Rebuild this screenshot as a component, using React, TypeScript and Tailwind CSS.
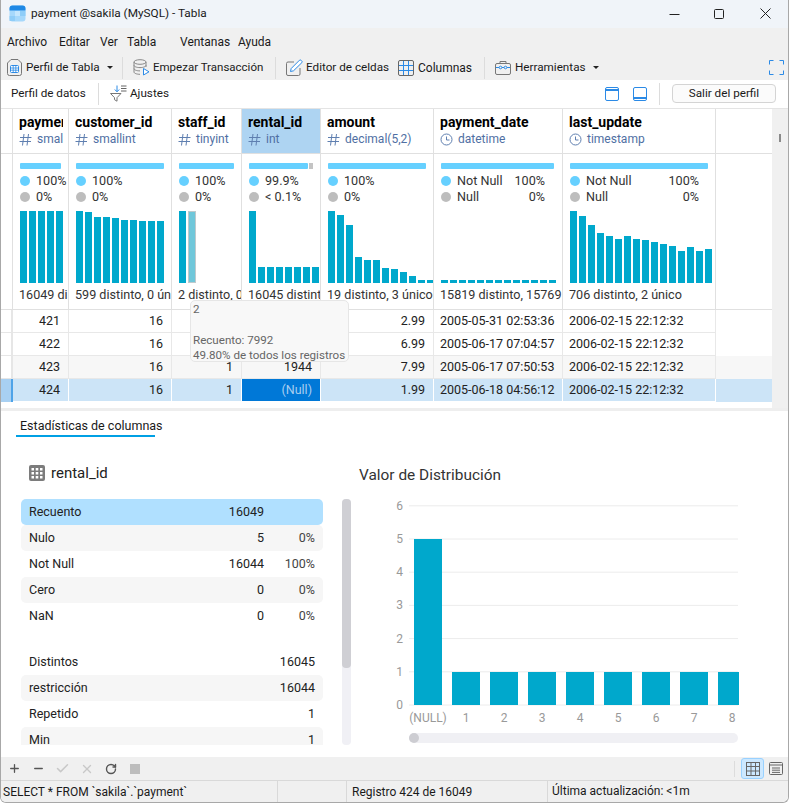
import { Check, Minus, Plus, RotateCw, X } from "lucide-react";

// Shared column template for header, summary and data rows of the profile grid.
const GRID_COLS = "grid grid-cols-[12px_56px_103px_70px_79px_113px_129px_153px]";

type Column = {
    name: string;
    type: string;
    clock?: boolean;
    active?: boolean;
    barClass: string;
    bars: number[];
    hoverBar?: number;
    notNull: string;
    nullPct: string;
    labels?: string;
    distinct: string;
    spare?: boolean;
};

const COLUMNS: Column[] = [
    { name: "payment_id", type: "smallint", barClass: "w-[41px]", bars: [72, 72, 72, 72, 72], notNull: "100%", nullPct: "0%", distinct: "16049 distinto, 16049 único" },
    { name: "customer_id", type: "smallint", barClass: "w-[88px]", bars: [72, 71, 66, 66, 65, 63, 63, 62, 62, 62], notNull: "100%", nullPct: "0%", distinct: "599 distinto, 0 único" },
    { name: "staff_id", type: "tinyint", barClass: "w-[55px]", bars: [72, 72], hoverBar: 1, notNull: "100%", nullPct: "0%", distinct: "2 distinto, 0 único" },
    { name: "rental_id", type: "int", active: true, barClass: "w-[59px]", spare: true, bars: [72, 16, 16, 16, 16, 16, 16, 16], notNull: "99.9%", nullPct: "< 0.1%", distinct: "16045 distinto, 16043 único" },
    { name: "amount", type: "decimal(5,2)", barClass: "w-[98px]", bars: [72, 68, 58, 26, 23, 23, 15, 14, 11, 7, 3, 3], notNull: "100%", nullPct: "0%", distinct: "19 distinto, 3 único" },
    { name: "payment_date", type: "datetime", clock: true, barClass: "w-[113px]", bars: [3, 3, 3, 3, 3, 3, 3, 3, 3, 3, 3, 3, 3], labels: "w-[88px]", notNull: "100%", nullPct: "0%", distinct: "15819 distinto, 15769 único" },
    { name: "last_update", type: "timestamp", clock: true, barClass: "w-[138px]", bars: [72, 67, 58, 50, 47, 44, 47, 44, 43, 41, 39, 37, 32, 36, 32, 34], labels: "w-[113px]", notNull: "100%", nullPct: "0%", distinct: "706 distinto, 2 único" },
];

const ROWS = [
    ["421", "16", "1", "1000", "2.99", "2005-05-31 02:53:36", "2006-02-15 22:12:32"],
    ["422", "16", "2", "1381", "6.99", "2005-06-17 07:04:57", "2006-02-15 22:12:32"],
    ["423", "16", "1", "1944", "7.99", "2005-06-17 07:50:53", "2006-02-15 22:12:32"],
    ["424", "16", "1", "(Null)", "1.99", "2005-06-18 04:56:12", "2006-02-15 22:12:32"],
];

const STATS = [
    { label: "Recuento", value: "16049", pct: "" },
    { label: "Nulo", value: "5", pct: "0%" },
    { label: "Not Null", value: "16044", pct: "100%" },
    { label: "Cero", value: "0", pct: "0%" },
    { label: "NaN", value: "0", pct: "0%" },
];

const STATS_MORE = [
    { label: "Distintos", value: "16045" },
    { label: "restricción", value: "16044" },
    { label: "Repetido", value: "1" },
    { label: "Min", value: "1" },
];

function HashIcon() {
    return (
        <svg width="13" height="13" viewBox="0 0 13 13" fill="none" stroke="#5f7fb0" strokeWidth="1">
            <path d="M1 4.500h11.500M0.500 8.500h11.500M5 1 3.500 12.500M9.500 1 8 12.500" />
        </svg>
    );
}

function ClockIcon() {
    return (
        <svg width="13" height="13" viewBox="0 0 13 13" fill="none" stroke="#5f7fb0" strokeWidth="1">
            <circle cx="6.500" cy="6.500" r="5.500" />
            <path d="M6.500 3.500v3.500h3" />
        </svg>
    );
}

function AppIcon() {
    return (
        <svg width="17" height="17" viewBox="0 0 17 17">
            <rect x="0.500" y="0.500" width="16" height="16" rx="3" fill="#a6d8fb" />
            <path d="M0.500 5.500v-2a3 3 0 0 1 3-3h10a3 3 0 0 1 3 3v2z" fill="#1e88e5" />
            <rect x="6" y="6" width="5" height="5" fill="#c4e6fd" />
            <rect x="0.500" y="11" width="5.500" height="5" fill="#8fcdf8" />
            <rect x="11" y="6" width="5.500" height="5" fill="#8fcdf8" />
        </svg>
    );
}

function TableDocIcon() {
    return (
        <svg width="15" height="17" viewBox="0 0 15 17" fill="none">
            <path d="M4 .5h7l3.500 3.500v10.500a2 2 0 0 1-2 2h-10a2 2 0 0 1-2-2V4z" stroke="#777" />
            <rect x="3.500" y="6.500" width="8" height="7" rx="1" fill="#fff" stroke="#2b8ae6" />
            <path d="M3.500 9h8M3.500 11.200h8M6.200 7v6M8.800 7v6" stroke="#2b8ae6" strokeWidth=".8" />
        </svg>
    );
}

function DbPlayIcon() {
    return (
        <svg width="17" height="17" viewBox="0 0 17 17" fill="none" stroke="#888">
            <ellipse cx="7" cy="3" rx="6" ry="2.300" />
            <path d="M1 3v10c0 1.300 2.700 2.300 6 2.300M13 3v5M1 6.300c0 1.300 2.700 2.300 6 2.300s6-1 6-2.300M1 9.600c0 1.300 2.700 2.300 6 2.300" />
            <path d="M10.500 9.500v6.500l5.500-3.200z" stroke="#2b8ae6" fill="#fff" />
        </svg>
    );
}

function PencilIcon() {
    return (
        <svg width="17" height="17" viewBox="0 0 17 17" fill="none">
            <path d="M8 3H2a1.500 1.500 0 0 0-1.500 1.500v10.500a1.500 1.500 0 0 0 1.500 1.500h10.500a1.500 1.500 0 0 0 1.500-1.500V9" stroke="#777" />
            <path d="M4.500 12.500 5.200 9.500 13.500 1.200a1 1 0 0 1 1.400 0l1 1a1 1 0 0 1 0 1.400L7.500 11.800z" stroke="#2b8ae6" fill="#fff" />
        </svg>
    );
}

function ColumnsIcon() {
    return (
        <svg width="16" height="16" viewBox="0 0 16 16" fill="none">
            <rect x=".5" y=".5" width="15" height="15" rx="1.500" stroke="#666" />
            <path d="M5.500 1v14M10.500 1v14M1 5.500h14M1 10.500h14" stroke="#2b8ae6" />
        </svg>
    );
}

function ToolboxIcon() {
    return (
        <svg width="16" height="16" viewBox="0 0 16 16" fill="none">
            <rect x=".5" y="3.500" width="15" height="11" rx="1.500" stroke="#777" />
            <path d="M5 3.500V1.500h6v2" stroke="#777" />
            <path d="M1 7.500h3M7 7.500h2M12 7.500h3" stroke="#2b8ae6" />
            <circle cx="5.500" cy="7.500" r="1.300" stroke="#2b8ae6" />
            <circle cx="10.500" cy="7.500" r="1.300" stroke="#2b8ae6" />
        </svg>
    );
}

function FilterSortIcon() {
    return (
        <svg width="17" height="17" viewBox="0 0 17 17" fill="none">
            <path d="M.5 8.500h10.500l-4 4.200v3.500l-2.500-1.500v-2z" stroke="#777" />
            <path d="M7 .5v6M4.800 4.500 7 6.800l2.200-2.300" stroke="#2b8ae6" />
            <path d="M11 1h5.500M11 3.500h5.500M11 6h5.500" stroke="#666" />
        </svg>
    );
}

function PanelIcon({ bottom }: { bottom?: boolean }) {
    return (
        <svg width="14" height="14" viewBox="0 0 14 14" fill="none">
            <rect x=".5" y=".5" width="13" height="13" rx="1.500" stroke="#2b8ae6" />
            <path d={bottom ? "M1 11h12" : "M1 3h12"} stroke="#2b8ae6" strokeWidth="2" />
        </svg>
    );
}

function Caret() {
    return <span className="h-0 w-0 border-x-[3px] border-t-[3px] border-x-transparent border-t-[#222]" />;
}

function Sep({ className }: { className: string }) {
    return <span className={`h-[22px] w-px shrink-0 bg-[#dcdcdc] ${className}`} />;
}

function GridBox() {
    return (
        <svg width="16" height="16" viewBox="0 0 16 16" fill="#7c7c7c">
            <rect width="16" height="16" rx="2" />
            <path fill="#fff" d="M2.500 3h2.500v2.500H2.500zM6.700 3h2.600v2.500H6.700zM11 3h2.500v2.500H11zM2.500 7h2.500v2.500H2.500zM6.700 7h2.600v2.500H6.700zM11 7h2.500v2.500H11zM2.500 11h2.500v2.500H2.500zM6.700 11h2.600v2.500H6.700zM11 11h2.500v2.500H11z" />
        </svg>
    );
}

function TitleBar() {
    return (
        <div className="flex h-[28px] items-center bg-[#f0f4f9] pl-[8px]">
            <AppIcon />
            <span className="ml-[5px] text-[11.8px] text-[#1a1a1a]">payment @sakila (MySQL) - Tabla</span>
            <div className="ml-auto flex items-center text-[#222]">
                <svg className="mr-[34px]" width="11" height="11" viewBox="0 0 11 11" stroke="currentColor"><path d="M.5 6.500h10" /></svg>
                <svg className="mr-[36px]" width="10" height="10" viewBox="0 0 10 10" fill="none" stroke="currentColor"><rect x=".5" y=".5" width="9" height="9" rx="1" /></svg>
                <svg className="mr-[17px]" width="11" height="11" viewBox="0 0 11 11" stroke="currentColor"><path d="m.5.5 10 10M10.500.5l-10 10" /></svg>
            </div>
        </div>
    );
}

function MenuBar() {
    return (
        <div className="flex h-[27px] items-center bg-[#f0f0f0] pl-[6px] pt-[2px] text-[12px] text-[#1a1a1a]">
            <span className="w-[52px]">Archivo</span>
            <span className="w-[41px]">Editar</span>
            <span className="w-[27px]">Ver</span>
            <span className="w-[53px]">Tabla</span>
            <span className="w-[58px]">Ventanas</span>
            <span>Ayuda</span>
        </div>
    );
}

function ToolBar() {
    return (
        <div className="flex h-[25px] items-center bg-[#f0f0f0] pl-[6px] pt-[1px] text-[11.7px] text-[#1a1a1a]">
            <TableDocIcon />
            <span className="ml-[4px] w-[81px] whitespace-nowrap">Perfil de Tabla</span>
            <Caret />
            <Sep className="ml-[9px]" />
            <span className="ml-[10px] flex"><DbPlayIcon /></span>
            <span className="ml-[3px] w-[113px] whitespace-nowrap text-[11.5px]">Empezar Transacción</span>
            <Sep className="ml-[9px]" />
            <span className="ml-[10px] flex"><PencilIcon /></span>
            <span className="ml-[3px] w-[84px] whitespace-nowrap">Editor de celdas</span>
            <span className="ml-[8px] flex"><ColumnsIcon /></span>
            <span className="ml-[4px] w-[56px] whitespace-nowrap text-[12px]">Columnas</span>
            <Sep className="ml-[10px]" />
            <span className="ml-[10px] flex"><ToolboxIcon /></span>
            <span className="ml-[4px] w-[78px] whitespace-nowrap">Herramientas</span>
            <Caret />
            <svg className="ml-[170px]" width="15" height="15" viewBox="0 0 15 15" fill="none" stroke="#2b8ae6">
                <path d="M.5 4.500V.5h4M10.500.5h4v4M14.500 10.500v4h-4M4.500 14.500h-4v-4" />
            </svg>
        </div>
    );
}

function ProfileBar() {
    return (
        <div className="flex h-[29px] items-center border-b border-[#e4e4e4] bg-white pl-[10px] text-[11.7px] text-[#1a1a1a]">
            <span className="w-[77px] whitespace-nowrap">Perfil de datos</span>
            <Sep className="ml-[10px]" />
            <span className="ml-[11px] flex"><FilterSortIcon /></span>
            <span className="ml-[3px] w-[40px]">Ajustes</span>
            <span className="ml-[435px] flex"><PanelIcon /></span>
            <span className="ml-[14px] flex"><PanelIcon bottom /></span>
            <Sep className="ml-[12px]" />
            <button className="ml-[12px] h-[19px] w-[104px] rounded-[4px] border border-[#d4d4d4] bg-[#fbfbfb] text-[11.7px] leading-none text-[#1a1a1a]">
                Salir del perfil
            </button>
        </div>
    );
}

function MiniBars({ col }: { col: Column }) {
    return (
        <div className="flex h-[72px] items-end gap-[2px] overflow-hidden">
            {col.bars.map((h, i) => (
                <span
                    key={i}
                    className={
                        col.hoverBar === i
                            ? "w-[8px] shrink-0 border border-[#bfc9cc] bg-[#6fc7da]"
                            : "w-[7px] shrink-0 bg-[#00a8cc]"
                    }
                    style={{ height: h }}
                />
            ))}
        </div>
    );
}

function SummaryCell({ col }: { col: Column }) {
    return (
        <div className="flex h-[155px] flex-col overflow-hidden border-r border-[#e0e0e0] pl-[7px] pt-[9px] text-[12.6px] leading-[16px] text-[#333]">
            <div className="flex items-center gap-[1px]">
                <span className={`h-[6px] rounded-[1px] bg-[#66d0ff] ${col.barClass}`} />
                {col.spare && <span className="h-[6px] w-[4px] bg-[#c4c4c4]" />}
            </div>
            <div className="mt-[4px] flex items-center whitespace-nowrap">
                <span className="mr-[6px] size-[10px] shrink-0 rounded-full bg-[#66d0ff]" />
                {col.labels ? (
                    <span className={`flex justify-between ${col.labels}`}>
                        <span>Not Null</span>
                        <span>{col.notNull}</span>
                    </span>
                ) : (
                    col.notNull
                )}
            </div>
            <div className="flex items-center whitespace-nowrap">
                <span className="mr-[6px] size-[10px] shrink-0 rounded-full bg-[#bdbdbd]" />
                {col.labels ? (
                    <span className={`flex justify-between ${col.labels}`}>
                        <span>Null</span>
                        <span>{col.nullPct}</span>
                    </span>
                ) : (
                    col.nullPct
                )}
            </div>
            <div className="mt-[6px]">
                <MiniBars col={col} />
            </div>
            <div className="mt-[4px] -ml-[1px] whitespace-nowrap">{col.distinct}</div>
        </div>
    );
}

function GridHeader() {
    return (
        <div className={`${GRID_COLS} h-[45px] border-b border-[#e0e0e0]`}>
            <div className="border-r border-[#e0e0e0]" />
            {COLUMNS.map((col) => (
                <div
                    key={col.name}
                    className={`border-r border-[#e0e0e0] pl-[6px] pr-[5px] pt-[4px] ${col.active ? "bg-[#aed4f2]" : "bg-white"}`}
                >
                    <div className="overflow-hidden">
                        <div className="whitespace-nowrap text-[14px] font-bold leading-[18px] text-black">{col.name}</div>
                        <div className="flex items-center whitespace-nowrap text-[12px] leading-[16px] text-[#4f6fa3]">
                            <span className="mr-[5px] flex shrink-0 pt-[2px]">{col.clock ? <ClockIcon /> : <HashIcon />}</span>
                            {col.type}
                        </div>
                    </div>
                </div>
            ))}
        </div>
    );
}

function DataRow({ row, index }: { row: string[]; index: number }) {
    const selected = index === 3;
    const rowBg = selected ? "bg-[#cce4f7]" : index === 2 ? "bg-[#f7f7f7]" : "bg-white";
    return (
        <div className={`${GRID_COLS} h-[23px] text-[12.5px] leading-[22px] text-[#222] ${rowBg}`}>
            <div className={`border-r-2 ${selected ? "border-[#4ea3e8] bg-[#a8d0f2]" : "border-b border-[#e6e6e6] bg-white"}`} />
            {row.map((value, i) => {
                const isNull = value === "(Null)";
                return (
                    <div
                        key={i}
                        className={`overflow-hidden whitespace-nowrap border-b border-r ${i < 5 ? "px-[8px] text-right" : "px-[6px] text-left"} ${selected ? "border-white" : "border-[#e8e8e8]"} ${isNull ? "bg-[#0078d7] text-[#a9cdf0]" : ""}`}
                    >
                        {value}
                    </div>
                );
            })}
        </div>
    );
}

function ProfileGrid() {
    return (
        <div className="relative flex h-[300px] bg-white">
            <div className="flex-1 overflow-hidden">
                <GridHeader />
                <div className={`${GRID_COLS} border-b border-[#e0e0e0]`}>
                    <div className="border-r border-[#e0e0e0]" />
                    {COLUMNS.map((col) => (
                        <SummaryCell key={col.name} col={col} />
                    ))}
                </div>
                {ROWS.map((row, i) => (
                    <DataRow key={row[0]} row={row} index={i} />
                ))}
            </div>
            <div className="flex w-[16px] justify-center bg-[#f0f0f0] pt-[25px]">
                <span className="h-[8px] w-[2px] bg-[#8a8a8a]" />
            </div>
            <div className="absolute left-[189px] top-[191px] h-[62px] w-[159px] rounded-[5px] border border-[#e6e6e6] bg-[#f8f8f8] px-[2px] pt-[1px] text-[11.6px] leading-[15px] text-[#666]">
                <div>2</div>
                <div className="mt-[16px]">Recuento: 7992</div>
                <div className="whitespace-nowrap">49.80% de todos los registros</div>
            </div>
        </div>
    );
}

function StatsList() {
    return (
        <div className="w-[302px] text-[12.5px] text-[#222]">
            {STATS.map((s, i) => (
                <div
                    key={s.label}
                    className={`flex h-[26px] items-center rounded-[5px] px-[8px] ${i === 0 ? "bg-[#b0e0ff]" : i % 2 === 1 ? "bg-[#f6f6f6]" : ""}`}
                >
                    <span className="flex-1">{s.label}</span>
                    <span className="w-[60px] text-right">{s.value}</span>
                    <span className="w-[51px] text-right text-[#444]">{s.pct}</span>
                </div>
            ))}
            <div className="h-[18px]" />
            <div className="h-[2px]" />
            {STATS_MORE.map((s, i) => (
                <div
                    key={s.label}
                    className={`flex h-[26px] items-center rounded-[5px] px-[8px] ${i % 2 === 1 ? "bg-[#f6f6f6]" : ""}`}
                >
                    <span className="flex-1">{s.label}</span>
                    <span>{s.value}</span>
                </div>
            ))}
        </div>
    );
}

function DistributionChart() {
    const ticks = [6, 5, 4, 3, 2, 1, 0];
    const labels = ["(NULL)", "1", "2", "3", "4", "5", "6", "7", "8"];
    const tickY = (t: number) => 705 - t * 33.2;
    return (
        <svg width="380" height="240" viewBox="359 500 380 240" className="block">
            {ticks.map((t) => (
                <g key={t}>
                    <line x1="409" x2="738" y1={tickY(t)} y2={tickY(t)} stroke="#ececec" />
                    <text x="403" y={tickY(t) + 4} textAnchor="end" fontSize="12" fill="#999">{t}</text>
                </g>
            ))}
            {labels.map((label, i) => {
                const x = 414 + i * 38;
                const width = i === 8 ? 21 : 28;
                const top = i === 0 ? 539 : 672;
                return (
                    <g key={label}>
                        <rect x={x} y={top} width={width} height={705 - top} fill="#00a8cc" />
                        <text x={i === 8 ? 732 : x + 14} y="722" textAnchor="middle" fontSize="12" fill="#999">{label}</text>
                    </g>
                );
            })}
        </svg>
    );
}

function StatsPanel() {
    return (
        <div className="relative flex h-[347px] flex-col bg-white">
            <div className="pl-[15px] pt-[2px]">
                <div className="inline-block w-[139px] whitespace-nowrap border-b-2 border-[#00a0e4] px-[4px] pb-[1px] text-[12.5px] leading-[16px] text-[#1a1a1a]">
                    Estadísticas de columnas
                </div>
            </div>
            <div className="flex flex-1 pl-[20px] pt-[23px]">
                <div className="w-[338px]">
                    <div className="flex h-[25px] items-center pl-[8px] pt-[2px] text-[15px] text-[#222]">
                        <GridBox />
                        <span className="ml-[6px]">rental_id</span>
                    </div>
                    <div className="mt-[14px] flex h-[246px]">
                        <div className="h-full overflow-hidden">
                            <StatsList />
                        </div>
                        <div className="ml-[19px] h-full w-[9px] rounded-[4px] bg-[#f0f0f5]">
                            <div className="h-[169px] rounded-[4px] bg-[#cfcfd4]" />
                        </div>
                    </div>
                </div>
                <div className="flex-1">
                    <div className="flex h-[25px] items-center whitespace-nowrap pt-[7px] text-[15.4px] text-[#333]">Valor de Distribución</div>
                    <div className="mt-[15px]">
                        <DistributionChart />
                    </div>
                    <div className="ml-[50px] mt-[-7px] h-[10px] w-[329px] rounded-[5px] bg-[#f0f0f4]">
                        <div className="h-[10px] w-[10px] rounded-full bg-[#cdcdd2]" />
                    </div>
                </div>
            </div>
        </div>
    );
}

function BottomBar() {
    return (
        <div className="flex h-[23px] items-center bg-[#f0f0f0] pl-[7px]">
            <Plus size={13} strokeWidth={2.4} className="text-[#555]" />
            <Minus size={13} strokeWidth={2.4} className="ml-[11px] text-[#555]" />
            <Check size={15} strokeWidth={2.4} className="ml-[10px] text-[#c8c8c8]" />
            <X size={14} strokeWidth={2.4} className="ml-[10px] text-[#c8c8c8]" />
            <RotateCw size={12} strokeWidth={2.8} className="ml-[11px] text-[#555]" />
            <span className="ml-[13px] size-[10px] bg-[#bdbdbd]" />
            <Sep className="ml-[594px] !h-[16px]" />
            <span className="ml-[6px] flex h-[21px] w-[23px] items-center justify-center rounded-[3px] border border-[#99d1ff] bg-[#cce8ff]">
                <svg width="14" height="14" viewBox="0 0 14 14" fill="none" stroke="#666">
                    <rect x=".5" y=".5" width="13" height="13" />
                    <path d="M.5 4.500h13M.5 9h13M5 .5v13M9.500 .5v13" />
                </svg>
            </span>
            <svg className="ml-[5px]" width="14" height="13" viewBox="0 0 14 13" fill="none" stroke="#666">
                <rect x=".5" y=".5" width="13" height="12" rx="1" />
                <path d="M.5 3h13M3 6h8M3 8.200h8M3 10.400h8" />
            </svg>
        </div>
    );
}

function StatusBar() {
    return (
        <div className="flex h-[22px] items-center rounded-br-[6px] border-t border-[#d9d9d9] bg-[#f0f0f0] text-[12px] text-[#1a1a1a]">
            <span className="w-[276px] whitespace-nowrap pl-[2px]">SELECT * FROM `sakila`.`payment`</span>
            <span className="h-full w-[70px] border-x border-[#d9d9d9]" />
            <span className="w-[200px] pl-[5px]">Registro 424 de 16049</span>
            <span className="h-full border-l border-[#d9d9d9] pl-[4px] leading-[21px]">Última actualización: &lt;1m</span>
        </div>
    );
}

export default function App() {
    return (
        <div className="flex h-[803px] w-[789px] flex-col overflow-hidden rounded-b-[6px] border-x border-b border-[#a8a8a8] bg-white font-['Roboto',sans-serif]">
            <TitleBar />
            <MenuBar />
            <ToolBar />
            <ProfileBar />
            <ProfileGrid />
            <div className="h-[3px] bg-[#eeeeee]" />
            <StatsPanel />
            <BottomBar />
            <StatusBar />
        </div>
    );
}
